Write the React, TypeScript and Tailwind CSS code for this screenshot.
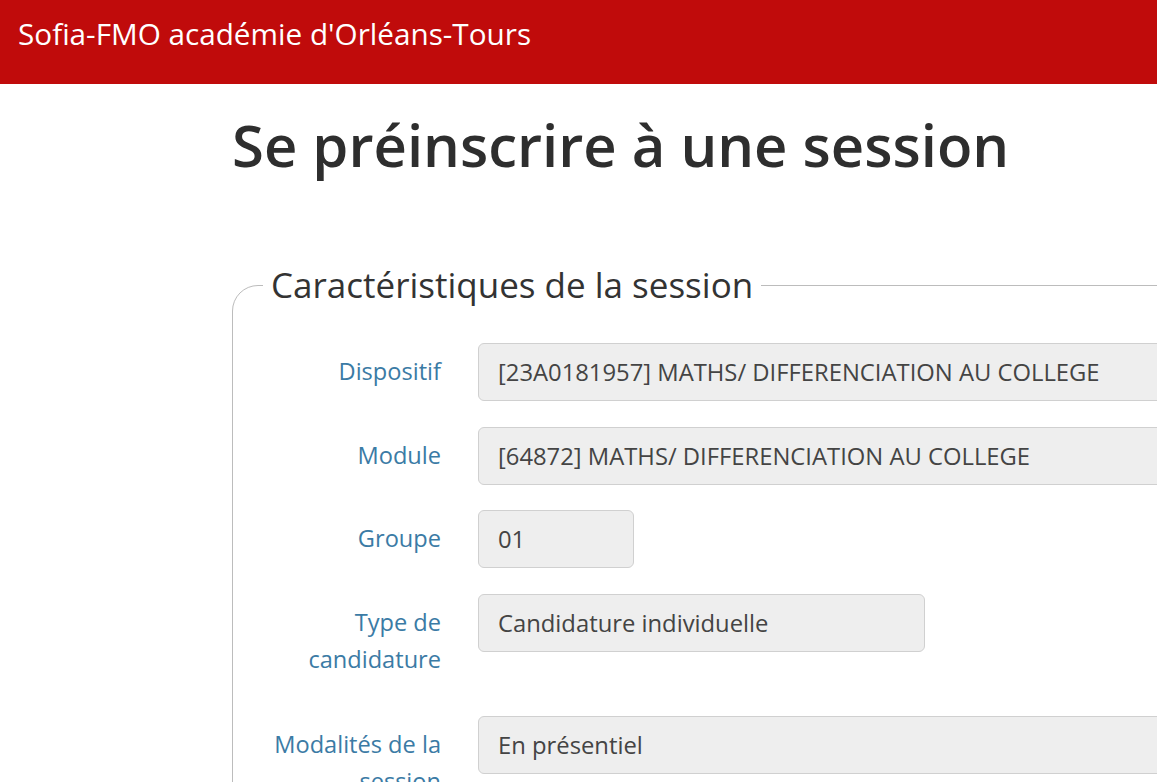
import React from 'react';

const font = { fontFamily: '"Open Sans", "Noto Sans", sans-serif' };

type Row = { label: React.ReactNode; value: string; width: string; mt: string };

const rows: Row[] = [
  { label: 'Dispositif', value: '[23A0181957] MATHS/ DIFFERENCIATION AU COLLEGE', width: 'w-[760px]', mt: 'mt-0' },
  { label: 'Module', value: '[64872] MATHS/ DIFFERENCIATION AU COLLEGE', width: 'w-[760px]', mt: 'mt-[26px]' },
  { label: 'Groupe', value: '01', width: 'w-[156px]', mt: 'mt-[25px]' },
  {
    label: (
      <>
        Type de
        <br />
        candidature
      </>
    ),
    value: 'Candidature individuelle',
    width: 'w-[447px]',
    mt: 'mt-[26px]',
  },
  {
    label: (
      <>
        Modalités de la
        <br />
        session
      </>
    ),
    value: 'En présentiel',
    width: 'w-[760px]',
    mt: 'mt-[27px]',
  },
];

function FormRow({ label, value, width, mt }: Row) {
  return (
    <div className={`flex items-start gap-[37px] ${mt}`}>
      <label className="w-[171px] shrink-0 pt-[10px] pb-[11px] text-right text-[23.6px] leading-[37px] text-[#3b7ba5]">
        {label}
      </label>
      <div
        className={`${width} h-[58px] shrink-0 rounded-[6px] border border-[#d0d0d0] bg-[#eeeeee] px-[19px] text-[23.8px] leading-[56px] whitespace-nowrap text-[#444]`}
      >
        {value}
      </div>
    </div>
  );
}

export default function App() {
  return (
    <div className="h-[782px] w-[1157px] overflow-hidden bg-white" style={font}>
      {/* Navbar */}
      <div className="flex h-[84px] items-start bg-[#c00b0b] pl-[18px] pt-[14px]">
        <span className="text-[29.7px] leading-[40px] text-white">Sofia-FMO académie d'Orléans-Tours</span>
      </div>

      <div className="pl-[232px]">
        <h1 className="mt-[21px] text-[58px] leading-[80px] font-semibold text-[#2e2e2e]">
          Se préinscrire à une session
        </h1>

        <fieldset className="mt-[77px] w-[1100px] rounded-tl-[26px] border border-[#bcbcbc] pb-[40px] pl-[37px]">
          <legend className="-ml-[7px] px-[8px] text-[35px] leading-[46px] text-[#333]">
            Caractéristiques de la session
          </legend>
          <div className="mt-[35px]">
            {rows.map((r, i) => (
              <FormRow key={i} {...r} />
            ))}
          </div>
        </fieldset>
      </div>
    </div>
  );
}
